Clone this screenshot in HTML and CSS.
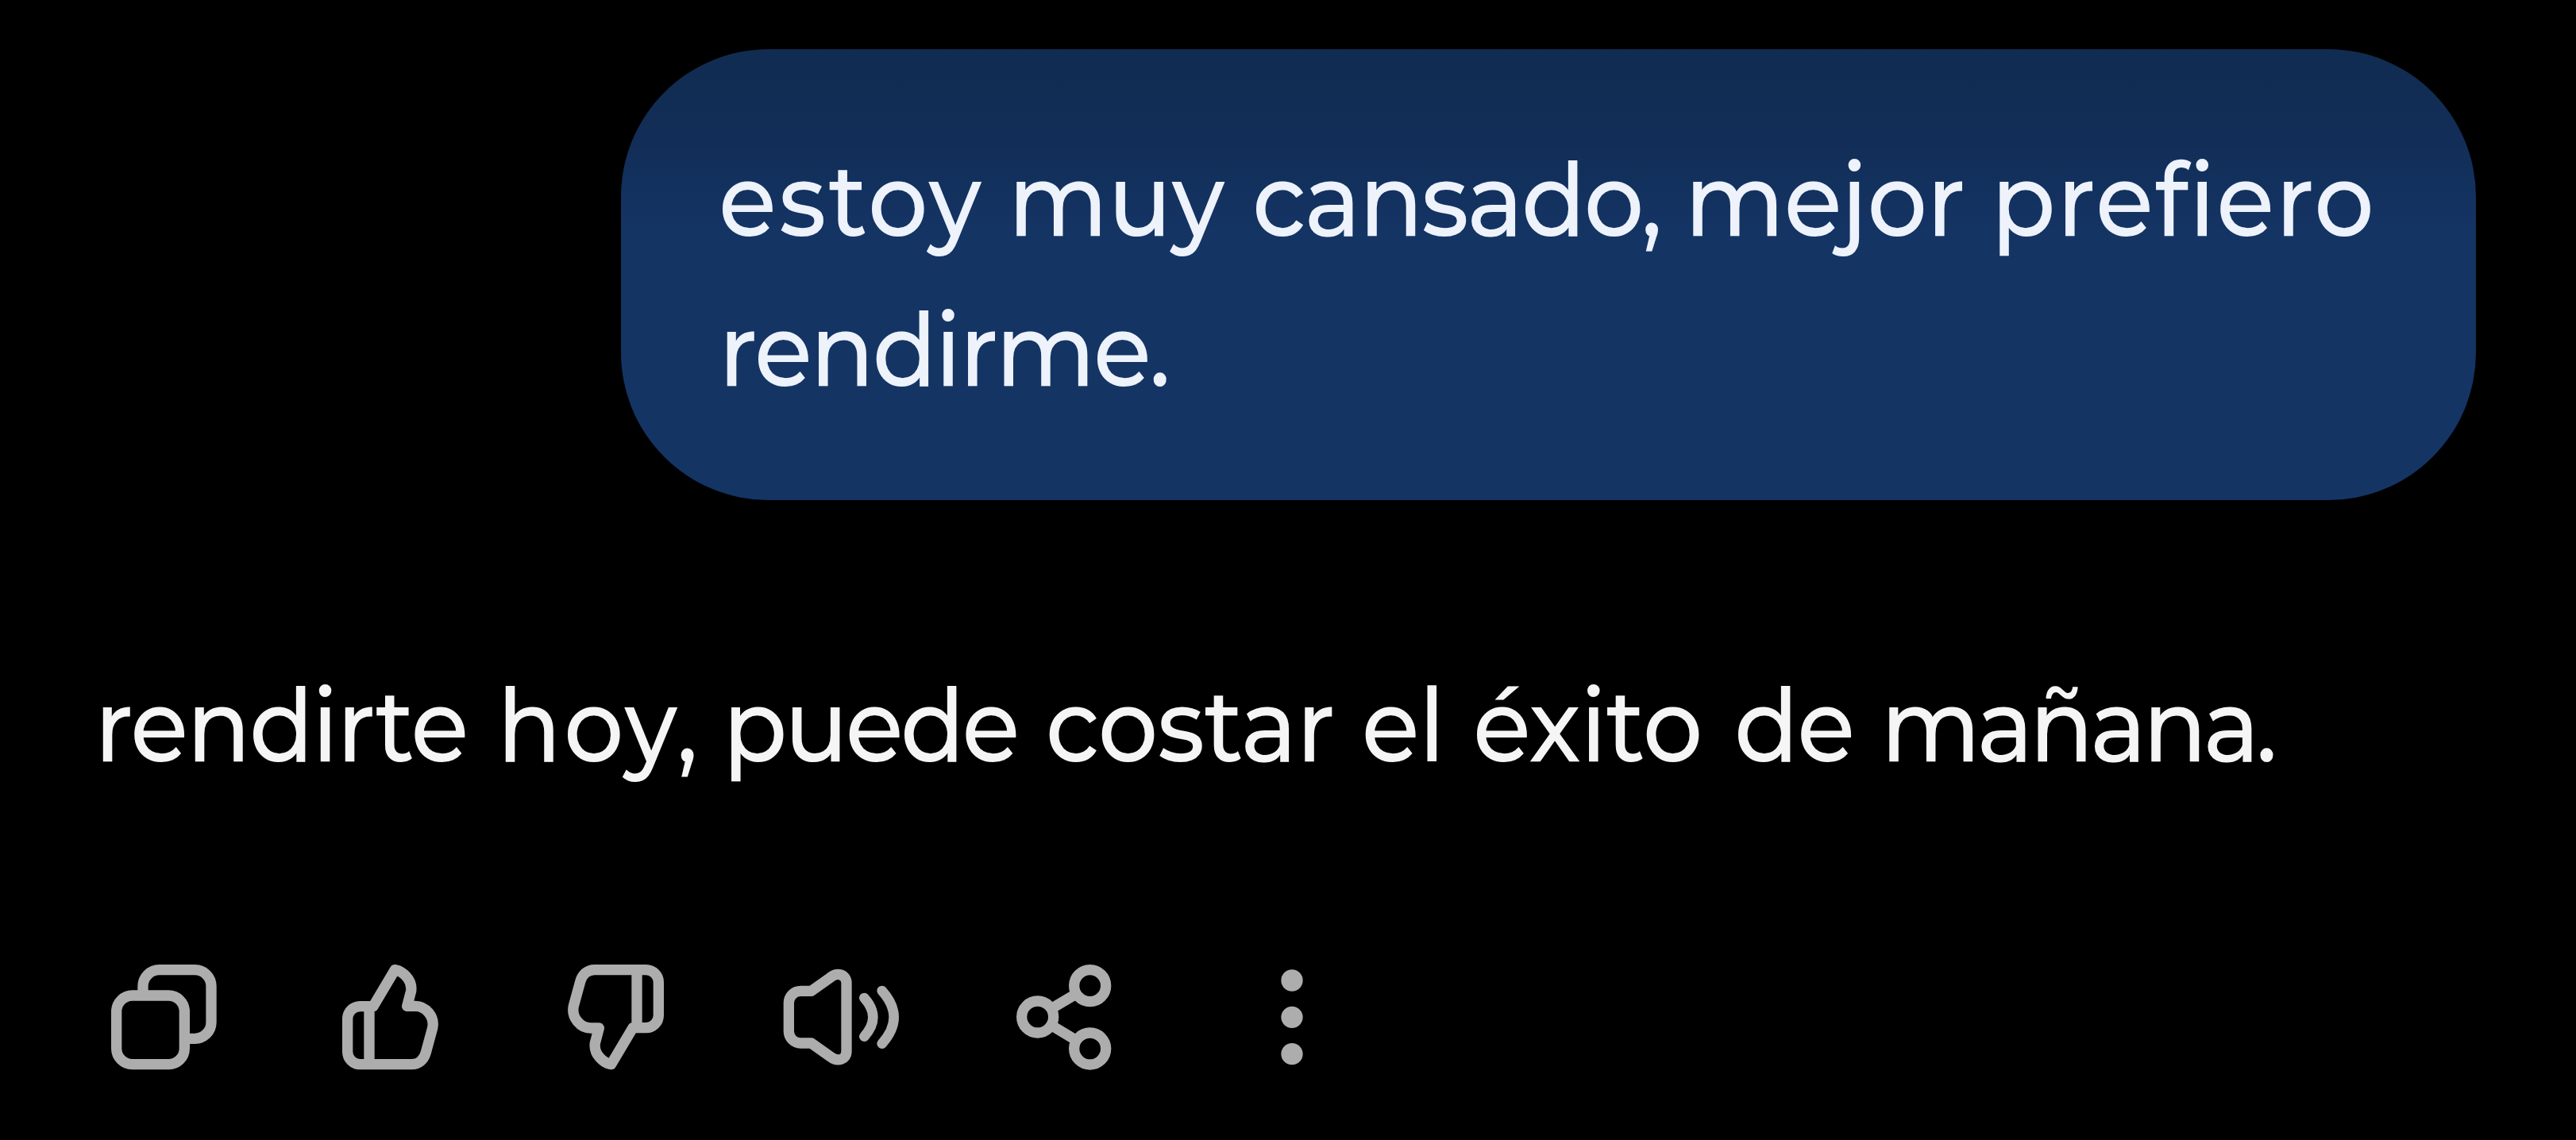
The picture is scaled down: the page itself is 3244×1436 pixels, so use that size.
FILE: index.html
```
<!DOCTYPE html>
<html lang="es">
<head>
<meta charset="utf-8">
<meta name="viewport" content="width=device-width, initial-scale=1">
<title>Chat</title>
<link rel="stylesheet" href="styles.css">
</head>
<body>

<main class="chat">
  <div class="bubble">
    <p class="text">
      <span class="w-estoy">estoy</span> <span class="w-muy">muy</span> <span class="w-cansado">cansado,</span> <span class="w-mejor">mejor</span> <span class="w-prefiero">prefiero</span><br>
      <span class="w-rendirme">rendirme.</span>
    </p>
  </div>

  <p class="text reply">
    <span class="w-rendirte">rendirte</span> <span class="w-hoy">hoy,</span> <span class="w-puede">puede</span> <span class="w-costar">costar</span> <span class="w-el">el</span> <span class="w-exito">éxito</span> <span class="w-de">de</span> <span class="w-manana">mañana.</span>
  </p>

  <div class="actions">
    <button type="button" aria-label="Copiar">
      <svg viewBox="0 0 432 432">
        <rect x="35" y="135" width="257" height="260" rx="60"/>
        <path d="M135 130V100a62 62 0 0 1 62-62H331a62 62 0 0 1 62 62V236a62 62 0 0 1-62 62H296"/>
      </svg>
    </button>
    <button type="button" aria-label="Me gusta">
      <svg viewBox="0 0 432 432">
        <path d="M103 176H153L235 38C262 42 302 74 296 118L281 175H312C352 175 386 215 377 258L352 350C344 378 325 395 298 395H103A47 47 0 0 1 56 348V223A47 47 0 0 1 103 176ZM138 176V395"/>
      </svg>
    </button>
    <button type="button" aria-label="No me gusta">
      <svg viewBox="0 0 432 432">
        <path transform="rotate(180 217.5 216.5)" d="M103 176H153L235 38C262 42 302 74 296 118L281 175H312C352 175 386 215 377 258L352 350C344 378 325 395 298 395H103A47 47 0 0 1 56 348V223A47 47 0 0 1 103 176ZM138 176V395"/>
      </svg>
    </button>
    <button type="button" aria-label="Escuchar">
      <svg viewBox="0 0 432 432">
        <path d="M19 163A45 45 0 0 1 64 118H104L176 67C204 45 237 56 237 88V345C237 377 204 388 176 366L104 315H64A45 45 0 0 1 19 270Z"/>
        <path class="wave" d="M304 144Q370 217 304 290M371 117Q461 217 371 317"/>
      </svg>
    </button>
    <button type="button" aria-label="Compartir">
      <svg viewBox="0 0 432 432">
        <circle cx="305" cy="98" r="60"/>
        <circle cx="107" cy="216" r="60"/>
        <circle cx="305" cy="336" r="60"/>
        <path d="M158 185L254 128M158 247L254 305"/>
      </svg>
    </button>
    <button type="button" aria-label="Más">
      <svg class="dots" viewBox="0 0 432 432">
        <circle cx="216" cy="78" r="41"/>
        <circle cx="216" cy="217" r="41"/>
        <circle cx="216" cy="356" r="41"/>
      </svg>
    </button>
  </div>
</main>

</body>
</html>
```
FILE: styles.css
```
body {
    margin: 0;
    background-color: #000;
    font-family: Montserrat, Inter, "Open Sans", sans-serif;
    font-size: 128px;
    font-weight: 500;
    line-height: 188.5px;
    white-space: nowrap;
}

.chat {
    display: flex;
    flex-direction: column;
    box-sizing: border-box;
    height: 1436px;
    padding-top: 62px;
    overflow: hidden;
}

.bubble {
    align-self: flex-end;
    box-sizing: border-box;
    width: 2336px;
    height: 568px;
    margin-right: 126px;
    padding: 95px 0 0 123px;
    border-radius: 186px;
    background: linear-gradient(#112c51 0, #122e58 120px, #143464 230px);
    color: #edf2fb;
}

/* slightly condensed letters */
.text {
    margin: 0;
    transform: scaleX(0.93);
    transform-origin: left top;
}

.text span {
    display: inline-block;
}

.reply {
    margin: 189px 0 0 119px;
    color: #f5f5f5;
}

/* word spacing */
.w-estoy { letter-spacing: 3px; margin-right: -1.6px; }
.w-muy { margin-right: 3px; }
.w-cansado { letter-spacing: -2.6px; margin-right: -1.7px; }
.w-mejor { letter-spacing: -0.7px; margin-right: 1.2px; }
.w-prefiero { letter-spacing: 1.5px; }
.w-rendirme { letter-spacing: -2.7px; }
.w-rendirte { letter-spacing: -2.3px; margin-right: 6.3px; }
.w-hoy { letter-spacing: 3px; margin-right: -3.9px; }
.w-puede { letter-spacing: -3.9px; margin-right: 4.4px; }
.w-costar { letter-spacing: -1px; margin-right: 2.7px; }
.w-el { letter-spacing: -1px; margin-right: 4.1px; }
.w-exito { letter-spacing: -0.8px; margin-right: 9.1px; }
.w-de { letter-spacing: -2px; margin-right: 2.3px; }
.w-manana { letter-spacing: -5.2px; }

.actions {
    display: flex;
    margin: 201px 0 0 65px;
}

.actions button {
    display: flex;
    justify-content: center;
    width: 284px;
    padding: 0;
    border: none;
    background: none;
    cursor: pointer;
}

.actions svg {
    width: 144px;
    height: 144px;
    overflow: visible;
    fill: none;
    stroke: #adadad;
    stroke-width: 40;
    stroke-linejoin: round;
}

.actions .wave {
    stroke-width: 38;
    stroke-linecap: round;
}

.actions .dots {
    fill: #adadad;
    stroke: none;
}
```
